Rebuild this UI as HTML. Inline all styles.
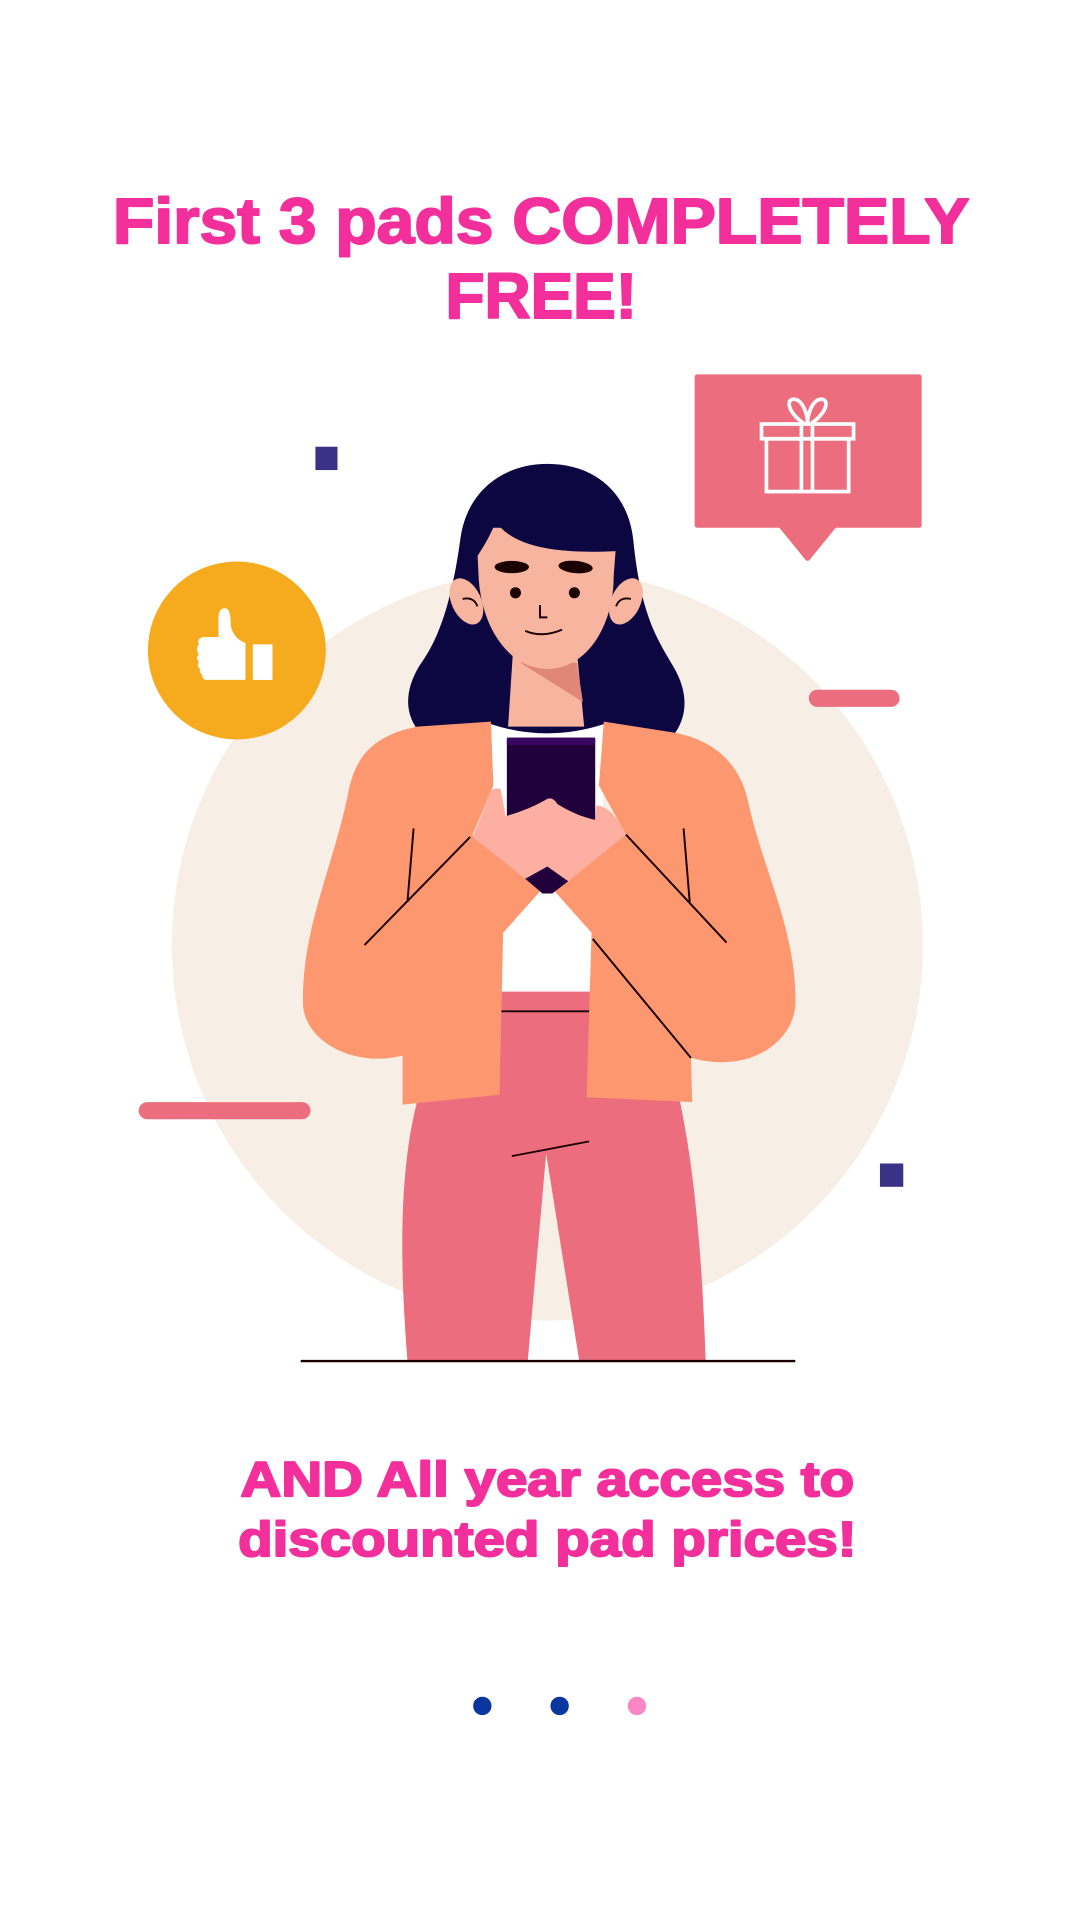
<!DOCTYPE html>
<html><head><meta charset="utf-8"><style>
html,body{margin:0;padding:0;background:#fff;width:1080px;height:1920px;overflow:hidden}
svg{display:block}
text{font-family:"Liberation Sans",sans-serif;font-weight:900;fill:#f22f9b;stroke:#f22f9b;stroke-width:1.6;stroke-linejoin:round}
</style></head><body>
<svg width="1080" height="1920" viewBox="0 0 880 1564.4" xmlns="http://www.w3.org/2000/svg">
<text x="441" y="198" text-anchor="middle" font-size="52" textLength="698" lengthAdjust="spacingAndGlyphs">First 3 pads COMPLETELY</text>
<text x="441" y="259" text-anchor="middle" font-size="52" textLength="156" lengthAdjust="spacingAndGlyphs">FREE!</text>

<circle cx="446" cy="770" r="306" fill="#f7eee6"/>
<rect x="257" y="364" width="18" height="19" fill="#3a3286"/>
<rect x="717" y="948" width="19" height="19" fill="#3a3286"/>
<rect x="659" y="562" width="74" height="14" rx="7" fill="#ec6e7e"/>
<rect x="113" y="898" width="140" height="14" rx="7" fill="#ec6e7e"/>

<!-- gift bubble -->
<rect x="566" y="305" width="185" height="125" rx="2" fill="#ec6e7e"/>
<path d="M636 428 L658 455 L680 428 Z" fill="#ec6e7e" stroke="#ec6e7e" stroke-width="4" stroke-linejoin="round"/>
<g fill="none" stroke="#fff" stroke-width="3">
<rect x="620.5" y="345.5" width="75" height="12"/>
<rect x="624.5" y="357.5" width="67" height="43"/>
<path d="M653 346 V400 M662 346 V400 M655 345 C640 335 640 322 650 326 C656 330 658 340 658 345 C658 340 660 330 666 326 C676 322 676 335 661 345"/>
</g>

<!-- thumb -->
<circle cx="193" cy="530" r="72.5" fill="#f6ab1e"/>
<path d="M166 519 H178 V502 Q179 494 185 496 Q188 498 188 510 Q190 520 200 524 V554 H168 Q164 553 165 550 Q162 548 163 545 Q160 543 162 539 Q159 536 162 533 Q159 529 162 525 Q160 520 166 519 Z" fill="#fff"/>
<rect x="206" y="525" width="16" height="29" fill="#fff"/>

<!-- hair back -->
<path d="M375 440 C380 400 410 378 446 378 C485 378 512 402 516 440 C522 500 535 520 548 542 C562 565 560 585 548 600 L345 600 C330 585 328 565 342 542 C358 520 368 490 375 440 Z" fill="#0c0740"/>
<!-- neck -->
<path d="M418 530 L470 530 L476 592 L414 592 Z" fill="#f7b49f"/>
<path d="M424 540 L470 540 L475 572 Z" fill="#e0877a"/>
<!-- ears -->
<ellipse cx="380" cy="490" rx="12" ry="20" fill="#f7b49f" transform="rotate(-25 380 490)"/>
<ellipse cx="510" cy="490" rx="12" ry="20" fill="#f7b49f" transform="rotate(25 510 490)"/>
<path d="M377 488 Q386 486 389 494 M514 488 Q505 486 502 494" stroke="#1a0000" stroke-width="1.5" fill="none"/>
<!-- face -->
<path d="M388 430 L503 430 L500 470 C500 510 478 545 446 545 C414 545 392 510 390 470 Z" fill="#f7b49f"/>
<!-- fringe -->
<path d="M380 440 C385 400 410 384 446 384 C485 384 508 405 510 440 L502 449 C460 451 420 448 404 425 C398 440 392 448 388 455 Z" fill="#0c0740"/>
<ellipse cx="417" cy="462" rx="14" ry="5" fill="#1a0000"/>
<ellipse cx="469" cy="462" rx="14" ry="5" fill="#1a0000" transform="rotate(5 469 462)"/>
<circle cx="420" cy="483" r="4.5" fill="#1a0000"/>
<circle cx="468" cy="483" r="4.5" fill="#1a0000"/>
<path d="M440 493 V503 H446 M428 514 Q442 520 458 513" stroke="#1a0000" stroke-width="1.6" fill="none"/>

<!-- pants -->
<path d="M400 806 L495 806 L550 880 C565 940 572 1020 575 1109 L472 1109 L445 940 L430 1109 L332 1109 C325 1020 325 940 345 880 Z" fill="#ec6e7e"/>
<!-- white top -->
<path d="M400 590 Q446 605 492 590 L490 808 L405 808 Z" fill="#fff"/>
<line x1="408" y1="824" x2="480" y2="824" stroke="#1a0000" stroke-width="1.5"/>
<line x1="417" y1="942" x2="480" y2="930" stroke="#1a0000" stroke-width="1.5"/>
<!-- jacket left -->
<path d="M400 588 L340 592 C300 600 288 620 283 650 C270 710 245 760 247 820 C250 850 290 870 328 860 L328 900 L407 892 L410 760 L442 724 L385 680 L402 640 Z" fill="#fd9770"/>
<!-- jacket right -->
<path d="M492 588 L550 597 C590 605 605 630 610 655 C622 710 650 760 648 820 C645 850 610 875 563 862 L564 898 L478 894 L482 760 L450 724 L510 680 L488 640 Z" fill="#fd9770"/>
<g stroke="#1a0000" stroke-width="1.6" fill="none">
<path d="M337 675 L332 735 M383 682 L297 770 M557 675 L562 735 M510 680 L592 768 M483 765 L563 862"/>
</g>
<!-- phone -->
<rect x="413" y="601" width="72" height="70" rx="2" fill="#22003b"/>
<rect x="413" y="601" width="72" height="6" fill="#3a0760"/>
<!-- hands -->
<path d="M398 650 Q400 640 408 643 L412 665 Q430 660 444 652 Q450 648 454 655 Q470 665 485 668 L486 656 Q500 658 510 680 L463 718 L446 706 L428 716 L385 682 Z" fill="#fdafa2"/>
<path d="M428 716 L446 706 L463 718 L450 728 L442 728 Z" fill="#22003b"/>

<line x1="245" y1="1109" x2="648" y2="1109" stroke="#1a0000" stroke-width="2"/>

<text x="446" y="1219" text-anchor="middle" font-size="40" textLength="500" lengthAdjust="spacingAndGlyphs">AND All year access to</text>
<text x="446" y="1268" text-anchor="middle" font-size="40" textLength="504" lengthAdjust="spacingAndGlyphs">discounted pad prices!</text>

<circle cx="393" cy="1390" r="7.5" fill="#0a36a0"/>
<circle cx="456" cy="1390" r="7.5" fill="#0a36a0"/>
<circle cx="519" cy="1390" r="7.5" fill="#fb86c5"/>
</svg>
</body></html>
